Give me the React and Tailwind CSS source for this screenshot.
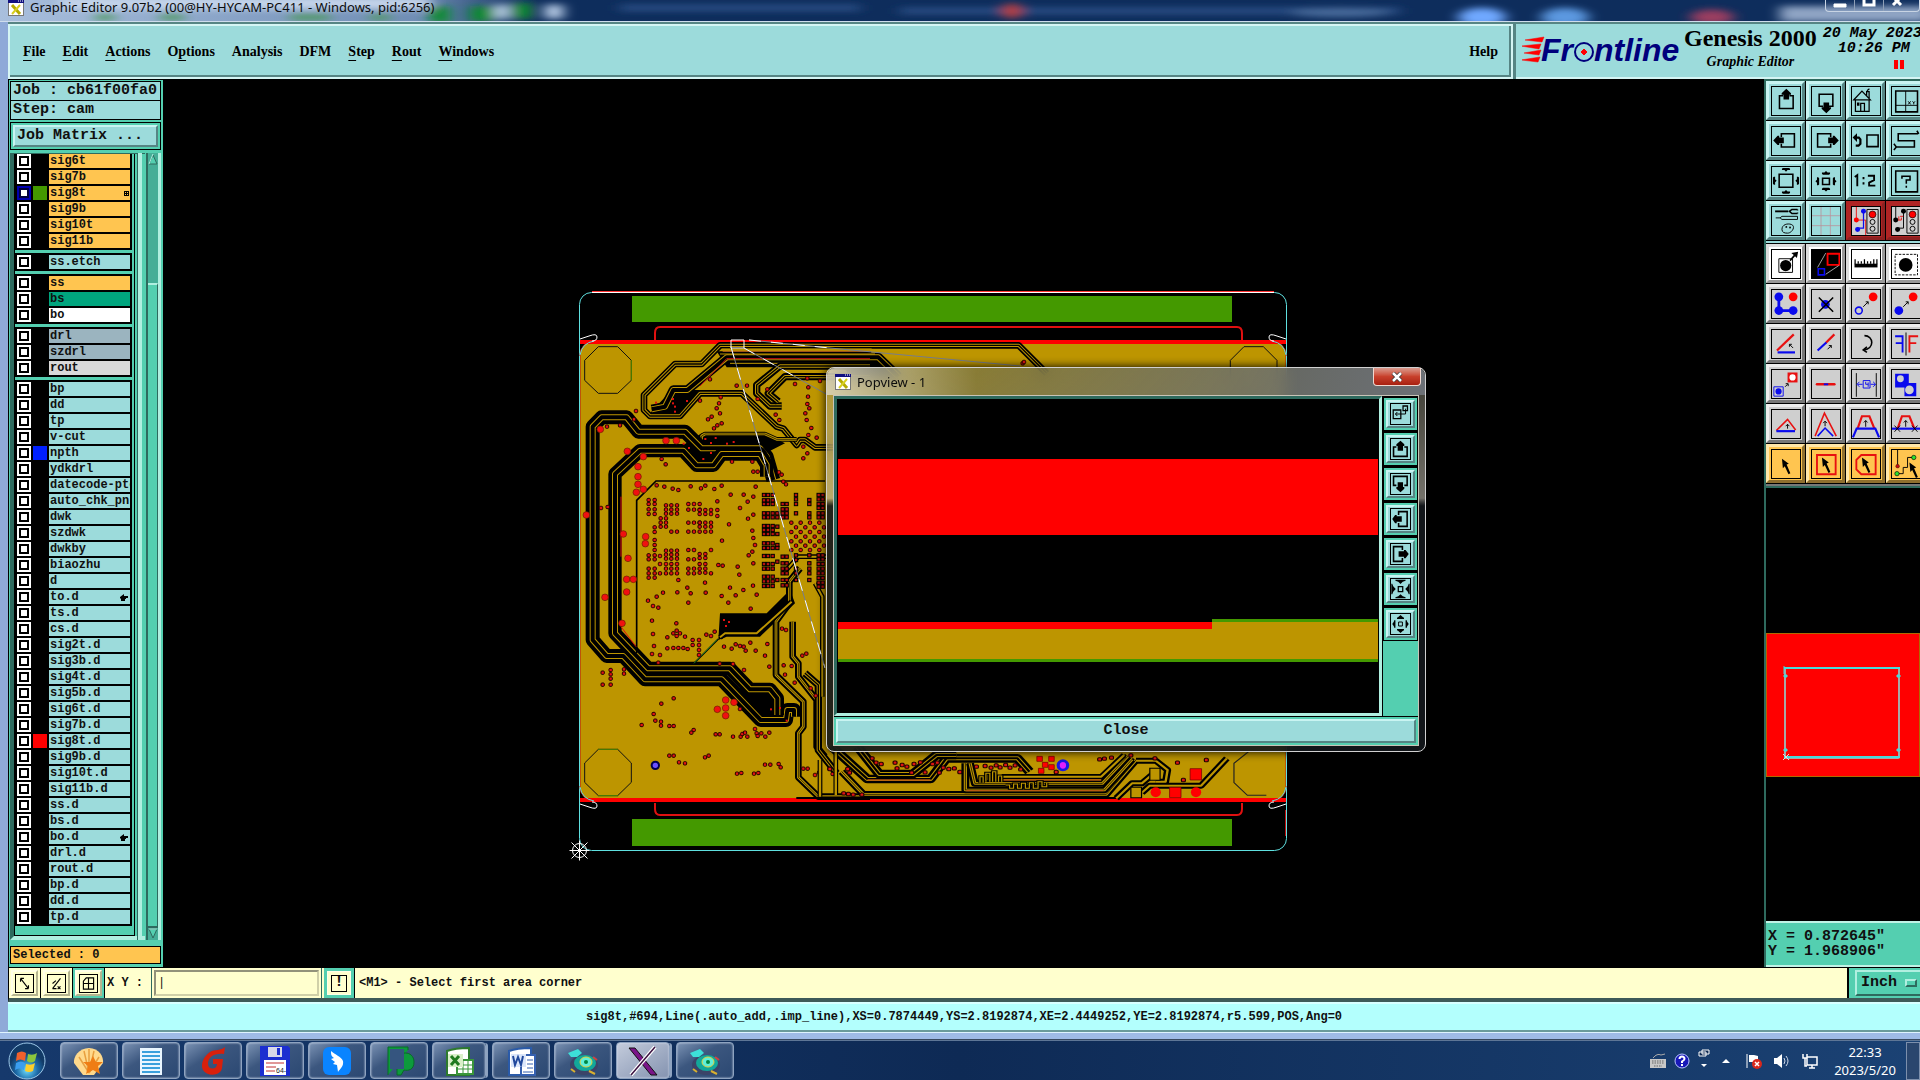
import React from "react";

const mono = "font-['Liberation_Mono','DejaVu_Sans_Mono',monospace]";
const serif = "font-['Liberation_Serif',serif]";
const sans = "font-['Noto_Sans','Open_Sans',sans-serif]";

const raised = "border-2 border-t-[#c9f4f2] border-l-[#c9f4f2] border-b-[#568584] border-r-[#568584]";

/* ---------- layer list ---------- */

const L = (name, tone = "sky", extra = {}) => ({ name, tone, ...extra });
const layerGroups = [
  [L("sig6t", "orange"), L("sig7b", "orange"), L("sig8t", "orange", { swatch: "bg-[#449900]", work: true }), L("sig9b", "orange"), L("sig10t", "orange"), L("sig11b", "orange")],
  [L("ss.etch")],
  [L("ss", "orange"), L("bs", "green"), L("bo", "white")],
  [L("drl", "steel"), L("szdrl", "steel"), L("rout", "gray")],
  [
    L("bp"), L("dd"), L("tp"), L("v-cut"), L("npth", "sky", { swatch: "bg-[#0020ff]" }), L("ydkdrl"), L("datecode-ptc"),
    L("auto_chk_pnl"), L("dwk"), L("szdwk"), L("dwkby"), L("biaozhu"), L("d"), L("to.d", "sky", { hand: true }), L("ts.d"),
    L("cs.d"), L("sig2t.d"), L("sig3b.d"), L("sig4t.d"), L("sig5b.d"), L("sig6t.d"), L("sig7b.d"),
    L("sig8t.d", "sky", { swatch: "bg-[#ff0000]" }), L("sig9b.d"), L("sig10t.d"), L("sig11b.d"), L("ss.d"), L("bs.d"),
    L("bo.d", "sky", { hand: true }), L("drl.d"), L("rout.d"), L("bp.d"), L("dd.d"), L("tp.d"),
  ],
];

const tones = {
  sky: "bg-[#9cdbdb]",
  orange: "bg-[#ffc550]",
  green: "bg-[#00a57e]",
  white: "bg-white",
  steel: "bg-[#9bb4bf]",
  gray: "bg-[#d9d9d9]",
};

function LayerRow({ layer }) {
  return (
    <div className="flex h-[14px] items-center">
      <input
        type="checkbox"
        aria-label={layer.name}
        defaultChecked={!!layer.work}
        className={
          "h-[14px] w-[14px] shrink-0 appearance-none border-2 bg-white " +
          (layer.work ? "border-[#0000b0] shadow-[inset_0_0_0_2px_#00003c]" : "border-white shadow-[inset_0_0_0_2px_#000]")
        }
      />
      <span className={"mx-0.5 h-[14px] w-[14px] shrink-0 " + (layer.swatch || "bg-black")} />
      <button
        type="button"
        className={
          "flex h-[14px] w-[81px] shrink-0 items-center overflow-hidden whitespace-nowrap pl-px text-left text-[12px] leading-[14px] font-bold text-[#101010] " +
          mono + " " + tones[layer.tone]
        }
      >
        {layer.name}
        {layer.work && (
          <svg className="ml-auto mr-px h-[5px] w-[5px] shrink-0" viewBox="0 0 5 5" shapeRendering="crispEdges">
            <path d="M0 0h5v5H0z" fill="#000" />
            <path d="M1 1h1v1H1zM3 1h1v1H3zM1 3h1v1H1zM3 3h1v1H3z" fill="#ffc550" />
          </svg>
        )}
        {layer.hand && (
          <svg className="ml-auto mr-0.5 h-[7px] w-[8px] shrink-0" viewBox="0 0 8 7">
            <path d="M0 3l4-3v2h4v2H6v1H5v2H1V5L0 4z" fill="#000" />
          </svg>
        )}
      </button>
    </div>
  );
}

function LeftPanel() {
  return (
    <aside className="flex w-[155px] shrink-0 flex-col border-t border-l border-black bg-[#54cfb0] p-px pr-0.5">
      <div className={"border border-black bg-[#9cdbdb] pl-0.5 text-[15px] leading-[18px] font-bold whitespace-nowrap text-[#101010] " + mono}>Job : cb61f00fa0</div>
      <div className={"-mt-px border border-black bg-[#9cdbdb] pl-0.5 text-[15px] leading-[18px] font-bold whitespace-nowrap text-[#101010] " + mono}>Step: cam</div>
      <div className="mt-0.5 border border-black p-0.5">
        <button type="button" className={"block w-full bg-[#9cdbdb] pl-0.5 text-left text-[15px] leading-[18px] font-bold text-[#101010] " + raised + " " + mono}>
          Job Matrix ...
        </button>
      </div>
      <div className="mt-[3px] flex min-h-0 flex-1">
        <div className="flex min-h-0 flex-1 flex-col overflow-hidden border-t border-t-[#2e6a5e] border-b-4 border-b-[#b0efe0] border-l-4 border-l-[#2e6a5e]">
          <div className="flex min-h-0 w-[121px] flex-1 flex-col gap-[3px] border-r border-b border-l border-black">
            {layerGroups.map((g, i) => (
              <div key={i} className={"flex w-[117px] shrink-0 flex-col gap-0.5 bg-black px-0.5 pb-0.5 " + (i ? "pt-0.5" : "")}>
                {g.map((l) => <LayerRow key={l.name} layer={l} />)}
              </div>
            ))}
          </div>
        </div>
        <div className="-ml-2 w-[5px] border-l border-[#2e6a5e] bg-[#b0efe0]" />
        <div className="ml-1 flex w-[15px] flex-col border-r-[3px] border-l-2 border-r-[#b0efe0] border-l-[#2e6a5e] bg-[#45ae97]">
          <svg className="h-3 w-full shrink-0" viewBox="0 0 10 12"><path d="M1 11L5 2l4 9z" fill="#54cfb0" stroke="#2e6a5e" /><path d="M1 11L5 1" stroke="#b0efe0" /></svg>
          <div className="h-[118px]" />
          <div className="flex-1 border-t-2 border-r border-b-2 border-t-[#b0efe0] border-r-[#2e6a5e] border-b-[#2e6a5e] bg-[#54cfb0]" />
          <svg className="h-3 w-full shrink-0" viewBox="0 0 10 12"><path d="M1 1l4 9 4-9z" fill="#54cfb0" stroke="#2e6a5e" /><path d="M1 1h8" stroke="#b0efe0" /></svg>
        </div>
      </div>
      <div className={"mt-1.5 mb-0.5 border border-black bg-[#ffc550] pl-0.5 text-[12px] leading-4 font-bold text-[#101010] " + mono}>Selected : 0</div>
    </aside>
  );
}

/* ---------- tool icons, drawn on a 90 unit grid ---------- */

const K = { fill: "none", stroke: "#000", strokeWidth: 5 };
const R = "#e81010";
const B = "#0a0aee";
const Tri = ({ x, y, r = 0 }) => <path transform={`translate(${x} ${y}) rotate(${r})`} d="M0-7l5 5h8v4l-3 3h-20l-3-3v-4h8z" fill="#000" />;
const Cursor = ({ x, y }) => <path transform={`translate(${x} ${y})`} d="M0 0l22 16-7 3 12 28-6 3-12-26-6 7z" fill="#000" />;

const icons = {
  up: <><path {...K} d="M36 28H24v41h44V28H56" /><path d="M46 6l15 14v5h-6v15H37V25h-6v-5z" /></>,
  down: <><path {...K} d="M36 62H23V23h44v39H54" /><path d="M46 84l15-14v-5h-6V50H37v15h-6v5z" /></>,
  left: <><path {...K} d="M30 32V22h42v42H30V54" /><path d="M4 43l14-15h5v6h15v18H23v6h-5z" /></>,
  right: <><path {...K} d="M60 32V22H18v42h42V54" /><path d="M86 43L72 28h-5v6H52v18h15v6h5z" /></>,
  home: <path fill="none" stroke="#000" strokeWidth="4" d="M6 41L32 13l27 28zM11 41v37h44V41M28 78V53h12v25M18 52h4v6h-4zM47 28V15h8v20M48 12l8-6" />,
  xy: <><path {...K} d="M12 13h70v67H12z" /><path stroke="#000" strokeWidth="3" d="M44 13v67M12 59h70M52 46l8 10M60 46l-8 10M66 46l4 5 4-5M70 51v5" fill="none" /></>,
  undo: <><path {...K} d="M48 26h36v37H48z" /><path {...K} strokeWidth="7" d="M14 34h8l5 6v14l-6 6h-9" /><path d="M2 34l14-14v28z" /></>,
  serp: <path {...K} d="M84 22H20v22h52v20H12M6 54l8 10-8 10M80 12l6 10" />,
  out: <><path {...K} d="M23 23h44v42H23z" /><Tri x={45} y={8} r={180} /><Tri x={45} y={81} /><Tri x={8} y={44} r={90} /><Tri x={82} y={44} r={270} /></>,
  pan: <><path {...K} d="M34 36h22v20H34z" /><Tri x={45} y={20} /><Tri x={45} y={72} r={180} /><Tri x={18} y={46} r={270} /><Tri x={72} y={46} r={90} /></>,
  half: <path {...K} strokeWidth="6" d="M6 32l8-6v36M34 32v7M34 49v7M48 28h20v14l-16 8v10h20" transform="translate(3 0)" />,
  help: <><path {...K} d="M12 13h70v67H12z" /><path {...K} d="M32 38v-8h26v12H46v12M46 60v7" /></>,
  paint: <><path stroke="#000" strokeWidth="6" d="M10 14h42" /><path {...K} d="M82 8H64L56 14l8 7h18M82 8v3M82 18v3" /><path {...K} strokeWidth="3" d="M12 35h14l6-5h50v10H32l-6-5M32 72c0-16 18-20 30-16 16 6 2 28-12 28-10 0-18-2-18-12z" /><circle cx="46" cy="64" r="3" /><circle cx="58" cy="66" r="3" /></>,
  grid: <path stroke="#b98f98" strokeWidth="2.5" fill="none" d="M29 0v90M59 0v90M0 28h90M0 60h90" />,
  net1: <><path d="M0 0h90v90H0z" fill="#cfcfcf" /><path stroke={R} strokeWidth="3" fill="none" d="M14 0v42h30v48" /><path stroke={B} strokeWidth="4" fill="none" d="M37 14v54H18" /><circle cx="14" cy="42" r="8" fill="#f00" /><circle cx="37" cy="14" r="8" fill={B} /><circle cx="18" cy="72" r="8" fill={B} /><path {...K} strokeWidth="3" d="M48 8h36v76H48z" /><circle cx="66" cy="24" r="11" fill="#f00" stroke="#000" strokeWidth="2" /><circle cx="66" cy="48" r="8" {...K} strokeWidth="3" /><circle cx="66" cy="70" r="8" {...K} strokeWidth="3" /></>,
  net2: <><path d="M0 0h90v90H0z" fill="#cfcfcf" /><path stroke="#000" strokeWidth="3" fill="none" d="M12 0v42M37 14v54H18" /><path stroke={R} strokeWidth="3" fill="none" d="M14 42h16v-8M22 30v12M26 30h10" /><circle cx="12" cy="42" r="8" /><circle cx="37" cy="14" r="8" /><circle cx="18" cy="72" r="8" /><path {...K} strokeWidth="3" d="M48 8h36v76H48z" /><circle cx="66" cy="24" r="11" fill="#f00" stroke="#000" strokeWidth="2" /><circle cx="66" cy="48" r="8" {...K} strokeWidth="3" /><circle cx="66" cy="70" r="8" {...K} strokeWidth="3" /></>,
  move: <><path {...K} strokeWidth="3" d="M22 28h44v44H22z" /><circle cx="44" cy="50" r="18" /><path d="M56 32l14-16-8-6 22-4-4 20-6-6-14 16z" /></>,
  zoomw: <><path d="M0 0h90v90H0z" /><path {...K} stroke="#f00" strokeWidth="6" d="M50 12h38v36H50z" /><path {...K} stroke={B} strokeWidth="5" d="M20 60h20v20H20z" /><path stroke="#fff" strokeWidth="2" d="M18 56L44 10M44 78l42-28" /></>,
  ruler: <><path d="M8 44h74v12H8z" /><path stroke="#000" strokeWidth="4" d="M10 30v16M20 36v8M30 36v8M40 30v16M50 36v8M60 36v8M70 30v16M80 30v16" /></>,
  pick: <><circle cx="44" cy="48" r="22" /><path {...K} strokeWidth="3" strokeDasharray="8 4" d="M10 14h72v66H10z" /></>,
  nodes: <><path stroke={B} strokeWidth="9" fill="none" d="M22 24v42h46" /><circle cx="22" cy="22" r="14" fill={B} /><circle cx="22" cy="66" r="14" fill={B} /><circle cx="68" cy="66" r="14" fill={B} /><circle cx="68" cy="22" r="14" fill="#f00" /></>,
  del: <><circle cx="43" cy="46" r="14" fill={B} /><path stroke="#000" strokeWidth="5" d="M22 24l46 46M68 24L22 70" /></>,
  copy: <><circle cx="68" cy="22" r="14" fill="#f00" /><circle cx="22" cy="66" r="11" fill="none" stroke={B} strokeWidth="5" /><path stroke="#000" strokeWidth="3" fill="none" d="M36 54l16-16M44 38h8v8" /></>,
  shift: <><circle cx="68" cy="22" r="14" fill="#f00" /><circle cx="22" cy="66" r="14" fill={B} /><path stroke="#000" strokeWidth="3" fill="none" d="M36 54l16-16M44 38h8v8" /></>,
  angle: <><path stroke={R} strokeWidth="7" d="M16 66L70 14" /><path stroke={B} strokeWidth="7" d="M18 72h56" /><path stroke="#000" strokeWidth="3" fill="none" d="M68 58L56 46M56 54v-8h8" /></>,
  line: <><path stroke={R} strokeWidth="7" d="M44 42L72 14" /><path stroke={B} strokeWidth="7" d="M18 66l28-26" /><path stroke="#000" strokeWidth="3" fill="none" d="M50 62l12-12M54 50h8v8" /></>,
  rot: <path {...K} d="M40 18c30 0 34 44-4 46M48 54L36 64l12 8" />,
  mirror: <><path stroke={B} strokeWidth="6" fill="none" d="M10 20h24v52M12 42h20" /><path stroke="#000" strokeWidth="3" d="M45 8v74" /><path stroke={R} strokeWidth="6" fill="none" d="M84 20H56v52M58 42h20" /></>,
  scale: <><path d="M50 8h32v32H50z" fill={R} /><circle cx="66" cy="24" r="10" fill="#fff" /><path {...K} stroke={B} strokeWidth="3" d="M6 54h30v30H6z" /><circle cx="21" cy="69" r="10" fill={B} /><path stroke="#000" strokeWidth="3" fill="none" d="M42 54l8-8M44 44h8v8" /></>,
  brk: <><path stroke={R} strokeWidth="8" strokeLinecap="round" d="M16 46h56" /><path stroke={B} strokeWidth="6" d="M38 46h14" /></>,
  dist: <><path stroke="#000" strokeWidth="3" d="M14 10v76M78 10v76" /><path {...K} stroke={B} strokeWidth="3" d="M36 34h22v24H36zM18 46h16M60 46h14M24 38l-8 8 8 8M68 38l8 8-8 8M44 38v8h8M52 40v14" /></>,
  shapes: <><path d="M10 12h44v30h24v42H40V56H10z" fill={B} /><circle cx="27" cy="28" r="11" fill="#cfcfcf" /><circle cx="56" cy="64" r="14" fill="#cfcfcf" /></>,
  t1: <><path {...K} stroke={R} d="M14 66l36-36 26 34" /><path stroke={B} strokeWidth="7" d="M14 68h60" /><path {...K} strokeWidth="3" d="M50 60V46M44 52l6-6 6 6" /></>,
  t2: <><path {...K} stroke={R} d="M10 84L40 10l38 74" /><path {...K} stroke={B} d="M18 84l24-26 26 26" /><path {...K} strokeWidth="3" d="M42 52V36M36 42l6-6 6 6" /></>,
  t3: <><path {...K} stroke={R} strokeWidth="7" d="M18 60l14-40h24l16 40" /><path {...K} stroke={B} strokeWidth="7" d="M3 88l12-28h60l12 28" /><path {...K} strokeWidth="3" d="M44 54V34M38 40l6-6 6 6" /></>,
  t4: <><path {...K} stroke={R} strokeWidth="7" d="M18 60l14-40h24l16 40" /><path stroke={B} strokeWidth="7" d="M0 60h90" /><path {...K} strokeWidth="3" d="M44 54V34M38 40l6-6 6 6M8 50l18 20M26 50L8 70M64 50l18 20M82 50L64 70" /></>,
  s1: <Cursor x={32} y={28} />,
  s2: <><path {...K} stroke={R} strokeWidth="6" d="M16 16h60v62H16z" /><Cursor x={32} y={24} /></>,
  s3: <><path {...K} stroke={R} strokeWidth="6" d="M30 16h46v62H30L14 62V32z" /><Cursor x={32} y={24} /></>,
  s4: <><path {...K} strokeWidth="3" d="M18 0v48M20 76h16V56h14V24h20" /><circle cx="18" cy="52" r="6" fill="#c01010" stroke="#000" /><circle cx="16" cy="76" r="7" fill="#2ee02e" stroke="#000" strokeWidth="2" /><circle cx="70" cy="24" r="7" fill="#2ee02e" stroke="#000" strokeWidth="2" /><Cursor x={56} y={40} /></>,
};

/* Heavier glyphs for the small buttons of the pop-up view, on a 60 unit grid. */
const small = {
  pop: <><path {...K} strokeWidth="4" d="M7 18h24v26H7zM38 6h14v14H38z" /><path {...K} strokeWidth="3" d="M46 14v16H14M20 24l-6 6 6 6" /></>,
  up: <><path {...K} d="M17 24H8v28h43V24h-9" /><path d="M30 5l12 11v5h-4v14H21V21h-4v-5z" /></>,
  down: <><path {...K} d="M17 34H8V7h43v27h-9" /><path d="M30 55l12-11v-5h-4V25H21v14h-4v5z" /></>,
  left: <><path {...K} d="M24 18V8h27v44H24V42" /><path d="M4 30l9-12h5v4h16v16H18v5h-5z" /></>,
  right: <><path {...K} d="M36 18V8H8v44h28V42" /><path d="M56 30L46 18h-5v4H24v16h17v5h5z" /></>,
  zin: <><path {...K} strokeWidth="4" d="M23 23h14v15H23z" /><path d="M14 2h32v3l-9 3-7 7-7-7-9-3zM14 58h32v-3l-9-3-7-6-7 6-9 3zM1 14v32h3l3-8 8-8-8-8-3-8zM59 14v32h-3l-3-8-8-8 8-8 3-8z" /></>,
  zout: <><path {...K} strokeWidth="3" d="M24 24h12v12H24z" /><path d="M30 3l7 6 4 2v4H19v-4l4-2zM30 57l7-6 4-2v-4H19v4l4 2zM4 30l5-7 1-4h4v22h-4l-1-4zM56 30l-5-7-1-4h-4v22h4l1-4z" /></>,
};

const toolRows = [
  ["up", "down", "home", "xy"],
  ["left", "right", "undo", "serp"],
  ["out", "pan", "half", "help"],
  ["paint", "grid", "net1", "net2"],
  ["move", "zoomw", "ruler", "pick"],
  ["nodes", "del", "copy", "shift"],
  ["angle", "line", "rot", "mirror"],
  ["scale", "brk", "dist", "shapes"],
  ["t1", "t2", "t3", "t4"],
  ["s1", "s2", "s3", "s4"],
];

const skins = {
  sky: "bg-[#9cdbdb] border-t-[#c9f4f2] border-l-[#c9f4f2] border-b-[#568584] border-r-[#568584]",
  red: "bg-[#b02424] border-t-[#b02424] border-l-[#b02424] border-b-[#8c2020] border-r-[#8c2020]",
  white: "bg-white border-t-[#dcdcdc] border-l-[#dcdcdc] border-b-[#999] border-r-[#999]",
  gray: "bg-[#cfcfcf] border-t-[#ededed] border-l-[#ededed] border-b-[#777] border-r-[#777]",
  amber: "bg-[#ffc550] border-t-[#ffe6a8] border-l-[#ffe6a8] border-b-[#8f6f2e] border-r-[#8f6f2e]",
};

function skinFor(row, name) {
  if (name.startsWith("net")) return skins.red;
  if (row < 4) return skins.sky;
  if (row === 4) return skins.white;
  if (row === 9) return skins.amber;
  return skins.gray;
}

function Tool({ name, skin }) {
  return (
    <button type="button" aria-label={name} className={"flex h-[39px] w-[39px] items-center justify-center border-[3px] " + skin}>
      <svg className="h-[30px] w-[30px] border border-black" viewBox="0 0 90 90">{icons[name]}</svg>
    </button>
  );
}

function RightPanel() {
  return (
    <aside className="flex w-[156px] shrink-0 flex-col overflow-hidden border-l-2 border-[#2e6a5e] bg-black">
      <div className="flex flex-col gap-px border-t-2 border-[#2e6a5e]">
        {toolRows.map((row, r) => (
          <div key={r} className={"flex gap-px " + (r === 4 ? "border-t-2 border-[#9cdbdb] pt-px" : "")}>
            {row.map((n) => <div key={n} className="shrink-0"><Tool name={n} skin={skinFor(r, n)} /></div>)}
          </div>
        ))}
      </div>
      <div className="mt-px h-1 border-t-2 border-b-2 border-t-[#777] border-b-[#2e6a5e]" />
      <div className="flex min-h-0 flex-1 flex-col">
        <div className="flex-1" />
        <div className="flex h-[144px] items-center border border-[#b06a00] bg-[#ff0000] pt-4 pl-4">
          <svg className="h-[94px] w-[118px] shrink-0" viewBox="0 0 118 94">
            <rect x="2" y="2" width="114" height="90" rx="1" fill="none" stroke="#a8a8a8" strokeWidth="2" />
            <path d="M1 2h116M1 91h116" stroke="#46dcdc" strokeWidth="2" />
            <path d="M1 0v8M1 9h3v2H1zM114 9h3v2h-3zM1 83h3v2H1zM114 83h3v2h-3z" fill="#46dcdc" stroke="#46dcdc" />
            <path d="M0 88l6 6M6 88l-6 6" stroke="#ddd" />
          </svg>
        </div>
        <div className="flex-1" />
      </div>
      <div className={"border-t-2 border-b-2 border-t-[#c0f3e6] border-b-[#c0f3e6] bg-[#54cfb0] px-0.5 py-1.5 text-[15px] leading-[15px] font-bold whitespace-pre text-[#101010] " + mono}>
        <div>X = 0.872645"</div>
        <div>Y = 1.968906"</div>
      </div>
    </aside>
  );
}

/* ---------- board artwork ---------- */

const GOLD = "#bd9500";

/* A trace bundle: a black clearance band with a pair of copper lines inside. */
function Bus({ d, w = 30, g = 14 }) {
  return (
    <g fill="none" strokeLinejoin="round">
      <path d={d} stroke="#000" strokeWidth={w} />
      <path d={d} stroke={GOLD} strokeWidth={g} />
      <path d={d} stroke="#000" strokeWidth={g - 6} />
    </g>
  );
}

const vias = [
  [420, 298], [500, 317], [531, 317], [390, 362], [452, 352], [447, 370], [440, 385], [450, 400], [425, 410], [414, 418], [432, 445], [455, 430], [442, 436],
  [198, 393], [192, 418], [150, 436], [111, 440], [675, 312], [712, 295], [750, 303], [715, 322], [714, 350], [712, 372], [718, 385], [706, 400], [710, 420],
  [724, 444], [617, 404], [628, 420], [563, 357], [592, 328], [715, 465], [740, 473], [700, 500], [712, 520], [700, 535], [275, 537], [287, 553], [486, 545],
  [547, 545], [550, 575], [563, 575], [627, 577], [635, 584], [640, 605], [648, 613], [93, 684], [113, 681], [557, 620], [455, 617], [433, 627], [406, 617],
  [393, 625], [362, 619], [325, 630], [308, 626], [283, 620], [260, 616], [482, 644], [521, 644], [550, 650], [533, 665], [510, 684], [477, 733], [534, 716],
  [550, 704], [456, 782], [547, 752], [550, 774], [555, 795], [536, 826], [547, 815], [550, 850], [503, 860], [508, 884], [445, 855], [458, 857], [325, 900],
  [405, 908], [480, 923], [520, 930], [549, 917], [560, 944], [407, 938], [362, 940], [352, 923], [322, 937], [279, 938], [260, 950], [234, 962], [355, 968],
  [455, 948], [497, 946], [475, 968], [249, 978], [265, 983], [542, 986], [246, 1022], [319, 1030], [249, 1062], [409, 1064], [423, 1068], [434, 1055],
  [292, 1072], [345, 1070], [292, 1105], [310, 1104], [325, 1104], [340, 1104], [353, 1107], [368, 1080], [368, 1095], [387, 1080], [387, 1095], [387, 1110],
  [387, 1125], [252, 1098], [246, 1122], [270, 1125], [265, 1148], [320, 1052], [320, 1068], [330, 1060], [310, 1060], [462, 1100], [497, 1093], [510, 1098],
  [521, 1100], [527, 1112], [541, 1088], [485, 1106], [557, 1112], [592, 1092], [585, 1127], [598, 1160], [522, 1170], [489, 1152], [449, 1151], [98, 1178],
  [122, 1170], [122, 1183], [122, 1196], [98, 1214], [122, 1214], [162, 1168], [162, 1181], [311, 1255], [274, 1271], [251, 1302], [256, 1322], [273, 1325],
  [273, 1337], [215, 1335], [298, 1338], [311, 1338], [371, 1350], [364, 1358], [437, 1363], [449, 1363], [489, 1370], [512, 1370], [517, 1362], [525, 1358],
  [532, 1370], [555, 1347], [560, 1360], [563, 1368], [574, 1360], [586, 1370], [598, 1358], [298, 1427], [311, 1427], [405, 1432], [416, 1427], [327, 1447],
  [345, 1450], [585, 1454], [601, 1454], [626, 1452], [632, 1462], [501, 1481], [514, 1479], [552, 1481], [565, 1479], [700, 1466], [713, 1466], [735, 1485],
  [747, 1478], [778, 1466], [788, 1482], [636, 1046], [648, 1050], [641, 1156], [645, 1184], [665, 1158], [674, 1208], [697, 1127], [709, 1121], [722, 1225], [737, 1247], [510, 1287],
  [1358, 250], [1362, 246],
];
const pads = [
  [91, 448], [172, 514], [204, 560], [204, 590], [204, 613], [220, 628], [199, 637], [220, 530], [288, 482], [319, 482], [49, 705], [160, 762], [227, 770],
  [226, 791], [174, 835], [170, 898], [190, 898], [105, 952], [156, 1030], [170, 936], [467, 1260], [467, 1284], [442, 1288], [492, 1267], [467, 1307],
];
const grid = (xs, ys) => xs.flatMap((x) => ys.map((y) => [x, y]));
const icPins = [
  ...grid([236, 254], [660, 672, 688, 702]), ...grid([288, 304, 321], [676, 689, 701]), ...grid([272, 288], [715, 728, 740]), ...grid([304, 321], [755]),
  ...grid([355, 372, 389], [672, 689, 728]), ...grid([389, 406, 423], [690, 702, 728, 740, 755]), ...grid([442], [664, 690, 708]), ...grid([355, 372], [755]),
  ...grid([254], [742, 756, 780, 795, 810]), ...grid([288, 304, 321], [812, 824, 836]), ...grid([236, 254], [826, 838, 866, 880, 893]), ...grid([270], [828, 852, 880]),
  ...grid([355, 372], [810, 838, 866, 880]), ...grid([389, 406], [822, 834, 852, 866, 878]), ...grid([423], [810, 880]), ...grid([288, 304, 321], [852, 866, 880]),
];
const bga = [
  ...grid([582, 594, 608], [645, 661, 672, 700, 712, 738, 750, 762, 790, 804, 828, 852, 866, 890, 904, 918]),
  ...grid([622], [700, 712, 740, 762, 795, 804, 845, 900]),
  ...grid([638, 650], [672, 688, 700, 712, 830, 850, 866, 880, 900, 916]),
  ...grid([678], [645, 658, 672, 700, 826, 840, 866, 880, 900]), ...grid([718], [660, 672, 700, 712, 826, 850, 866, 880, 900]),
  ...grid([746, 758], [645, 658, 672, 684, 700, 712, 826, 838, 852, 866, 880, 894, 908, 920]),
];
const bgaCross = [...grid([664, 692, 720, 748], [728, 756, 784, 810]), ...grid([678, 706, 734, 762], [742, 770, 797])];

const Via = ({ p }) => <rect x={p[0] - 5} y={p[1] - 5} width="10" height="10" rx="3" fill="#e01414" stroke="#200000" strokeWidth="3" />;

function Board() {
  return (
    <svg className="absolute top-0 left-0 h-[887px] w-[1601px]" viewBox="163 79 1601 887">
      {/* panel outline */}
      <rect x="579.5" y="292.5" width="707" height="558" rx="12" fill="none" stroke="#5fe0e0" />
      <path d="M592 291.5h682" stroke="#f33" />
      <path d="M592 292.5h682" stroke="#fff" />
      <path d="M1285.500 810v26" stroke="#c01010" />
      <rect x="632" y="296" width="600" height="26" fill="#449900" />
      <rect x="632" y="819" width="600" height="27" fill="#449900" />
      <path d="M655 340v-7q0-6 5-6h577q5 0 5 6v7M655 803v6q0 6 5 6h577q5 0 5-6v-6" fill="none" stroke="#e01010" strokeWidth="2" />
      {/* board body */}
      <rect x="580" y="341" width="706" height="460" rx="14" fill={GOLD} stroke="#c01010" />
      <path d="M579.500 356V786M1286.500 356V786" stroke="#5fe0e0" />
      <path d="M580 342h706M580 800h706" stroke="#f00" strokeWidth="4" />
      <path d="M580 355q2-12 14-14M580 787q2 12 14 14M1286 355q-2-12-14-14M1286 787q-2 12-14 14" fill="none" stroke="#5fe0e0" />
      <path d="M580 339l9-3q8-3 8 1q0 4-5 4M580 804l9 3q8 3 8-1q0-4-5-4M1286 339l-9-3q-8-3-8 1q0 4 5 4M1286 804l-9 3q-8 3-8-1q0-4 5-4" fill="none" stroke="#fff" />

      <g transform="translate(570 280) scale(.33333)">
        <path d="M85 200h58l41 41v60l-41 39H85l-41-39v-60zM85 1408h58l41 41v58l-41 40H85l-41-40v-58z" fill="none" stroke="#111" strokeWidth="3" />
        <path d="M184 241v60M85 1408h58M85 1547h58" stroke="#4c8a00" strokeWidth="3" />
        <path d="M2080 200h-58l-41 41v60l41 39h58l41-39v-60z" fill="none" stroke="#111" strokeWidth="3" />
        <path d="M235 405l70-75h85l-55 80zM395 460h190l60 30-50 25h-140l-30 50h-50l-50-60zM450 1000h140l70-70 15 40-105 100H470l-25 10zM540 1215h60l30 30v80l-60-10-75-85z" fill="#000" />
        <Bus d="M1430 280L1346 196H450L395 252H315L222 345V390L240 408H330L390 340H515L620 440L640 446L680 495L690 480H705L735 502H800" w={20} g={10} />
        <path d="M440 214H900L990 300H850L820 262H470z" fill="#000" />
        <Bus d="M985 290L925 232H470L352 330H310L285 380L245 388" w={28} g={18} />
        <path d="M455 207H905M450 222H915M480 250H890" stroke={GOLD} strokeWidth="3" />
        <path d="M458 214H900" stroke="#b8601c" strokeWidth="3" />
        <path d="M470 236H900M470 236L390 318" stroke="#c81414" strokeWidth="3" fill="none" />
        <Bus d="M900 258H630L560 315V340L600 378H635" w={22} g={10} />
        <Bus d="M900 290H645L595 340L625 365" w={22} g={10} />
        <Bus d="M395 490V468L405 462H585L620 478H680" w={14} g={8} />
        <Bus d="M610 600L590 530L570 505H395L345 455H205L170 412H95L68 440V1080L110 1128H160L225 1198H455L572 1320H648L652 1290H672V1310" w={42} g={18} />
        <Bus d="M590 590V555L570 522H455L430 556H380L340 512H210L135 582V1060L235 1165H480L540 1228H600L622 1255V1305" w={40} g={18} />
        <path d="M765 603H258L200 661V1120M370 1152l75-75" fill="none" stroke="#000" strokeWidth="5" />
        <path d="M153 650v180M153 1040l45 60" stroke="#e01010" strokeWidth="3" />
        <path d="M372 1150l70-72" stroke="#1c7a1c" strokeWidth="3" />
        <Bus d="M690 865L658 905V970L618 1025V1185L700 1265V1340L685 1360V1492L745 1550H900" w={20} g={8} />
        <Bus d="M450 1072L465 1060H560L665 965" w={16} g={6} />
        <Bus d="M668 1025V1130L685 1150V1190L740 1260V1400L765 1430" w={20} g={8} />
        <Bus d="M705 1180L745 1215V1410L800 1480" w={22} g={10} />
        <Bus d="M775 830H685L640 880M735 910L757 950V1250" w={14} g={6} />
        {vias.map((p, i) => <Via key={i} p={p} />)}
        {icPins.map((p, i) => <Via key={i} p={p} />)}
        <g stroke="#000" strokeWidth="3" fill="#b81212">
          {bga.map((p, i) => <rect key={i} x={p[0] - 5} y={p[1] - 5} width="10" height="10" />)}
        </g>
        {bgaCross.map((p, i) => <Via key={i} p={p} />)}
        <g fill="#f01010" stroke="#6a2000" strokeWidth="2">
          {pads.map((p, i) => <circle key={i} cx={p[0]} cy={p[1]} r="10" />)}
        </g>
        <g fill="#e01010">
          {[[406, 477], [437, 474], [491, 486], [471, 491], [423, 489], [400, 537], [423, 519], [357, 504], [341, 491], [309, 357], [309, 370], [351, 363], [315, 380], [315, 395], [258, 368], [462, 1020], [477, 1026], [468, 1038], [603, 1288], [630, 1284], [650, 1322]].map((p, i) => (
            <rect key={i} x={p[0] - 3} y={p[1] - 3} width="6" height="6" />
          ))}
        </g>
        <circle cx="256" cy="1456" r="11" fill="#6a50ff" stroke="#000050" strokeWidth="6" />
      </g>

      {/* lower edge routing */}
      <g transform="translate(820 600) scale(.395 .33333)">
        <Bus d="M30 440L120 537H280L320 475H500L530 515" w={26} g={12} />
        <Bus d="M95 440L150 522H235L295 465H345" w={26} g={12} />
        <Bus d="M0 480V590M40 450V585" w={12} g={6} />
        <Bus d="M55 515L110 583H725L800 480" w={20} g={8} />
        <Bus d="M368 490V570H720L790 478" w={20} g={8} />
        <Bus d="M380 490L392 550H715L780 468" w={20} g={8} />
        <Bus d="M460 530H712L770 465" w={16} g={6} />
        <path d="M120 540H280M460 540H712M370 572H718" stroke="#b85a10" strokeWidth="4" fill="none" />
        <path d="M-60 594H750" stroke="#000" strokeWidth="6" />
        <Bus d="M750 595L790 550H815L845 520M850 545H875L880 510L850 482H800M815 578L835 557H965L1030 475" w={18} g={6} />
        <path d="M405 548V530H413V548M420 545V520H430V545M437 545V515H445V545M452 545V528H460V545M470 555H480V565H490V552H500V565H510V550H520V565H530V548H540V565H552V545H562V560H574V548" fill="none" stroke="#000" strokeWidth="9" />
        <path d="M405 548V530H413V548M420 545V520H430V545M437 545V515H445V545M452 545V528H460V545M470 555H480V565H490V552H500V565H510V550H520V565H530V548H540V565H552V545H562V560H574V548" fill="none" stroke={GOLD} strokeWidth="3" />
        <path d="M1085 455L1048 490V548L1082 586H1130" fill="none" stroke="#222" strokeWidth="3" />
        <path d="M787 562h27v31h-27zM835 505h26v36h-26z" fill={GOLD} stroke="#000" strokeWidth="3" />
        <path d="M937 506h29v34h-29zM885 562h29v31h-29zM549 469h14v15h-14zM579 469h14v15h-14zM563 487h14v15h-14zM579 494h14v15h-14zM553 505h14v15h-14z" fill="#f00" stroke="#700" strokeWidth="2" />
        <ellipse cx="850" cy="577" rx="13" ry="15" fill="#f00" /><ellipse cx="952" cy="577" rx="13" ry="15" fill="#f00" />
        <ellipse cx="615" cy="496" rx="12" ry="14" fill="#e020ff" stroke="#1818e0" strokeWidth="8" />
        {[[132, 475], [142, 488], [155, 492], [208, 495], [195, 505], [190, 488], [220, 500], [238, 492], [254, 487], [285, 492], [297, 488], [312, 503], [326, 507], [340, 505], [354, 516], [396, 500], [418, 498], [433, 503], [446, 496], [456, 502], [470, 495], [481, 503], [494, 496], [508, 508], [232, 518], [266, 517], [302, 518], [708, 478], [720, 476], [738, 473], [787, 466], [848, 475], [905, 488], [978, 480], [920, 540], [598, 516], [25, 507], [70, 507], [75, 518], [60, 580], [72, 582], [84, 584], [106, 584]].map((p, i) => <Via key={i} p={p} />)}
      </g>

      {/* zoom guides */}
      <g fill="none">
        <path d="M731 340h13v8h-13z" stroke="#fff" />
        <path d="M731 347L825 668M744 348l82 46M749 340l81 8 190 18" stroke="#777d8c" />
        <path d="M731 347L825 668M744 348l50 28M749 340l81 8" stroke="#fff" strokeDasharray="12 10" />
      </g>
      {/* datum */}
      <g stroke="#fff" fill="none" transform="translate(579.500 850.500)">
        <circle r="7" /><path d="M-10 0H10M0-10V10M-8-8L8 8M8-8L-8 8" />
      </g>
    </svg>
  );
}

function XIcon() {
  return (
    <svg className="h-4 w-4 shrink-0" viewBox="0 0 16 16">
      <path d="M0 0h16v16H0z" fill="#777" /><path d="M1 3h14v12H1z" fill="#fff" /><path d="M0 0h16v3H0z" fill="#101080" /><path d="M10 1h1M12 1h1M14 1h1" stroke="#fff" />
      <path d="M4 5l8 9" stroke="#b5ab00" strokeWidth="3" /><path d="M12 5l-8 9" stroke="#d8cf20" strokeWidth="2" />
    </svg>
  );
}

function Popview() {
  return (
    <section className="absolute top-[288px] left-[663px] flex h-[385px] w-[600px] flex-col rounded-lg border border-[#d0d0d0] bg-linear-to-b from-[#9a988060] via-[#b8b4a8a0] via-34% to-[#14181ce8] to-36% px-1.5 pb-[5px] shadow-[0_0_10px_#000] backdrop-blur-sm">
      <header className="relative -mx-1.5 flex h-[27px] shrink-0 items-center gap-1.5 rounded-t-lg bg-linear-to-r from-[#e8e6dcb0] via-[#6e6a3899] via-25% to-[#6c7076] px-1.5 pl-2">
        <XIcon />
        <h2 className={"text-[13px] leading-5 text-[#0c0c0c] " + sans}>Popview - 1</h2>
        <button type="button" aria-label="Close Popview" className="absolute top-0 right-1 flex h-[18px] w-12 items-center justify-center rounded-b border border-t-0 border-[#f0d8d0] bg-linear-to-b from-[#d99a8e] via-[#c8402c] via-50% to-[#a82010]">
          <svg className="h-[10px] w-3" viewBox="0 0 12 10"><path d="M2 1l8 8M10 1L2 9" stroke="#333" strokeWidth="4" /><path d="M2 1l8 8M10 1L2 9" stroke="#fff" strokeWidth="2.5" /></svg>
        </button>
      </header>
      <div className="flex min-h-0 flex-1 flex-col border border-[#c8c4b8] bg-black">
        <div className="flex min-h-0 flex-1">
          <div className="flex flex-1 flex-col border-[3px] border-t-[#2e6a5e] border-r-[#b0efe0] border-b-[#b0efe0] border-l-[#2e6a5e] bg-black px-px">
            <div className="h-[60px]" />
            <div className="h-[76px] bg-[#ff0000]" />
            <div className="h-[84px]" />
            <div className="flex h-[43px] items-end border-b-[3px] border-[#449900]">
              <div className="h-[37px] w-[374px] border-t-[7px] border-[#ff0000] bg-[#bd9500]" />
              <div className="h-[40px] flex-1 border-t-[3px] border-[#449900] bg-[#bd9500]" />
            </div>
          </div>
          <div className="ml-px flex w-[35px] flex-col bg-[#54cfb0]">
            {["pop", "up", "down", "left", "right", "zin", "zout"].map((n) => (
              <div key={n} className="border border-t-2 border-black p-0.5">
                <button type="button" aria-label={"View " + n} className={"flex h-7 w-full items-center justify-center bg-[#9cdbdb] " + raised}>
                  <svg className="h-[22px] w-[21px] border border-black" preserveAspectRatio="none" viewBox="0 0 60 60">{small[n]}</svg>
                </button>
              </div>
            ))}
          </div>
        </div>
        <div className="mt-px bg-[#54cfb0] p-0.5">
          <button type="button" className={"block w-full bg-[#9cdbdb] text-center text-[15px] leading-5 font-bold text-[#101010] " + raised + " " + mono}>Close</button>
        </div>
      </div>
    </section>
  );
}

/* ---------- header ---------- */

function TitleBar() {
  return (
    <header className="relative flex h-[22px] shrink-0 items-start gap-1.5 overflow-hidden border-b border-[#cfdcec] bg-linear-to-r from-[#a9bfdd] via-[#6f8db5] via-22% to-[#0e2d5c] to-28% pl-2">
      <svg className="absolute inset-0 h-full w-full" preserveAspectRatio="none" viewBox="0 0 1920 27">
        <defs><filter id="soft"><feGaussianBlur stdDeviation="7 4" /></filter></defs>
        <g filter="url(#soft)">
          <path d="M60 -4h370v16H60z" fill="#c4d4ea" />
          <path d="M95 18h20v8h-20zM160 18h24v8h-24zM290 18h40v8h-40zM370 18h20v8h-20z" fill="#4f9a60" />
          <path d="M430 8h20v22h-20zM470 8h24v20h-24zM512 4h20v20h-20z" fill="#0f8a30" />
          <path d="M495 6h14v18h-14zM545 6h18v18h-18z" fill="#bcd0ea" />
          <ellipse cx="1482" cy="22" rx="24" ry="12" fill="#6fa8ff" /><ellipse cx="1565" cy="22" rx="24" ry="12" fill="#5c98e0" />
          <ellipse cx="1712" cy="22" rx="22" ry="10" fill="#9a3c60" /><path d="M1780 8h150v20h-150z" fill="#8fa4c4" />
          <path d="M620 10h240M900 14h500" stroke="#2b4f86" strokeWidth="8" />
          <circle cx="1012" cy="14" r="10" fill="#b84040" /><ellipse cx="1340" cy="16" rx="50" ry="6" fill="#4a6c9c" />
        </g>
      </svg>
      <div className="relative flex items-start gap-1.5">
        <XIcon />
        <h1 className={"text-[13px] leading-[15px] whitespace-nowrap text-[#0c0c0c] " + sans}>
          Graphic Editor 9.07b2 (00@HY-HYCAM-PC411 - Windows, pid:6256)
        </h1>
      </div>
      <div className="relative ml-auto flex h-3 w-[95px] shrink-0 rounded-b border border-t-0 border-[#c8d4e4]">
        {["M8 4h12v3H8z", "M9 0v5h10V0", "M9-3l8 8M17-3l-8 8"].map((d, i) => (
          <button key={i} type="button" aria-label={["Minimize", "Restore", "Close"][i]} className={"flex items-start border-[#8fa0b8] " + (i ? "border-l" : "")}>
            <svg className="h-[10px] w-[28px]" viewBox="0 0 28 10"><path d={d} fill={i ? "none" : "#fff"} stroke="#fff" strokeWidth={i ? 3 : 1} /></svg>
          </button>
        ))}
      </div>
    </header>
  );
}

const menus = [["", "F", "ile"], ["", "E", "dit"], ["", "A", "ctions"], ["O", "p", "tions"], ["Analysis", "", ""], ["DFM", "", ""], ["", "S", "tep"], ["", "R", "out"], ["", "W", "indows"]];

function MenuBar() {
  return (
    <div className="flex h-[57px] shrink-0 border-t-2 border-[#568584] bg-[#568584]">
      <nav className={"flex flex-1 items-center gap-[17px] border-2 border-t-[#d5f5f4] border-r-[#d5f5f4] border-b-[#d5f5f4] border-l-[#d5f5f4] bg-[#9cdbdb] px-[13px] text-[14px] leading-5 font-bold text-black shadow-[inset_-2px_-2px_0_#568584] " + serif}>
        {menus.map(([a, u, b]) => (
          <button key={a + u + b} type="button">{a}<span className="underline decoration-1 underline-offset-4">{u}</span>{b}</button>
        ))}
        <button type="button" className="ml-auto">Help</button>
      </nav>
      <div className="ml-[3px] flex w-[404px] shrink-0 overflow-hidden border-b-2 border-b-[#d5f5f4] bg-[#9cdbdb] pl-1.5">
        <svg className="h-[54px] w-[162px] shrink-0" viewBox="0 -10 162 54">
          <path d="M4 4h18v3H4zM0 11h20v3H0zM0 18h19v3H0zM0 25h18v3H0z" fill="#9cdbdb" />
          <path d="M3 6l19-3-2 5zM-1 12l20-2-2 5zM2 19l17-3-2 5zM-1 26l19-3-2 5z" fill="#f00" stroke="#f00" strokeWidth=".5" />
          <text x="19" y="27" fontSize="32" fontWeight="bold" fontStyle="italic" fontFamily="Liberation Sans, sans-serif" fill="#00007c">Fr</text>
          <circle cx="62" cy="18" r="9" fill="#9cdbdb" stroke="#00007c" strokeWidth="2" /><path d="M62 15l3 3-3 3-3-3z" fill="#f00" stroke="#f00" />
          <text x="72" y="27" fontSize="32" fontWeight="bold" fontStyle="italic" fontFamily="Liberation Sans, sans-serif" fill="#00007c">ntline</text>
        </svg>
        <div className={"shrink-0 text-center text-black " + serif}>
          <div className="text-[24px] leading-7 font-bold">Genesis 2000</div>
          <div className="text-[14px] leading-5 font-bold italic">Graphic Editor</div>
        </div>
        <div className={"ml-1.5 flex shrink-0 flex-col items-end pt-0.5 text-[15px] leading-[15px] font-bold text-black italic " + mono}>
          <span>20 May 2023</span>
          <span className="mr-3">10:26 PM</span>
          <span className="mt-1 mr-[18px] flex gap-0.5"><i className="h-[9px] w-1 bg-[#f00]" /><i className="h-[9px] w-1 bg-[#f00]" /></span>
        </div>
      </div>
    </div>
  );
}

/* ---------- bottom rows ---------- */

function CommandRow() {
  const cells = ["M7 6l14 18M7 6v6M7 6h6M21 24v-6M21 24h-6", "M7 24L21 6M7 15l6-5M7 24h7M16 20l5 5M21 20l-5 5", "M5 15h18M14 5v20M5 25h18V5H10L5 11z"];
  return (
    <div className={"flex h-[35px] shrink-0 border-t border-b-4 border-l border-t-black border-b-[#3e5a58] border-l-black bg-[#ffffce] text-[12px] font-bold text-[#101010] " + mono}>
      {cells.map((d, i) => (
        <button key={i} type="button" aria-label={["Snap line", "Snap angle", "Snap grid"][i]} className={"flex w-8 items-center justify-center border-r border-black p-0.5 " + (i === 2 ? "bg-[#54cfb0]" : "bg-[#ffffce]")}>
          <span className="flex h-full w-full items-center justify-center border-2 border-t-[#ffffe8] border-r-[#b5b590] border-b-[#b5b590] border-l-[#ffffe8] bg-[#ffffce]">
            <svg className="h-[19px] w-[19px] border border-black" viewBox="0 0 28 30"><path d={d} fill="none" stroke="#000" strokeWidth="2" /></svg>
          </span>
        </button>
      ))}
      <label htmlFor="xy" className="flex items-center pr-2 pl-0.5 whitespace-pre">X Y :</label>
      <div className="border-r border-l border-[#2e6a5e] p-0.5">
        <input id="xy" type="text" defaultValue="|" className="h-full w-[165px] border-2 border-t-[#92927a] border-r-[#d0d0a8] border-b-[#d0d0a8] border-l-[#92927a] bg-[#ffffce] px-0.5 font-normal" />
      </div>
      <button type="button" aria-label="Message history" className="ml-0.5 flex w-[31px] items-center justify-center border-r border-black bg-[#54cfb0] p-[3px]">
        <span className="flex h-full w-full items-center justify-center border border-[#ffffe8] bg-[#ffffce]">
          <span className="flex h-[17px] w-4 items-center justify-center border border-black text-[15px] leading-4">!</span>
        </span>
      </button>
      <output className="flex flex-1 items-center pl-1">&lt;M1&gt; - Select first area corner</output>
      <div className="flex w-[73px] shrink-0 items-stretch overflow-hidden border-l-2 border-black bg-[#54cfb0] pt-0.5 pb-0.5 pl-1.5">
        <button type="button" className="flex w-[76px] shrink-0 items-center border-t-2 border-b-2 border-l-2 border-t-[#b0efe0] border-b-[#2e6a5e] border-l-[#b0efe0] pl-1 text-[15px]">
          Inch<span className="ml-2 h-2 w-3 border-2 border-t-[#b0efe0] border-r-[#2e6a5e] border-b-[#2e6a5e] border-l-[#b0efe0]" />
        </button>
      </div>
    </div>
  );
}

const apps = [
  <path key="a" d="M16 3C6 3 0 12 1 18l9 12h11l9-12C31 12 26 3 16 3z" fill="#ffd98c" />,
  <path key="b" d="M5 3h22v27H5z" fill="#e9f6ff" />,
  <path key="c" d="M28 2c-4 4-10 2-15 5-6 4-10 12-7 18 4 7 18 6 19-2l1-9H16v5h4c0 6-9 6-9 0 0-7 6-11 16-10z" fill="#d8200c" />,
  <path key="d" d="M1 1h28l2 2v28H1z" fill="#1c2ed0" />,
  <rect key="e" x="2" y="2" width="28" height="28" rx="6" fill="#0a84ff" />,
  <path key="f" d="M5 30V2h20v3M14 30V17c0-12 17-12 17 0 0 8-6 9-10 8l-3 5z" fill="#0d9a3c" stroke="#086a28" />,
  <path key="g" d="M4 6Q12 3 26 3v27H4z" fill="#fff" stroke="#2d7a2d" strokeWidth="2" />,
  <path key="h" d="M4 6Q12 3 26 3v27H4z" fill="#fff" stroke="#2a5aa8" strokeWidth="2" />,
  null, null, null,
];
const details = [
  <g key="a"><path d="M16 28L6 12M16 28L11 6M16 28V4M16 28L21 6M16 28l10-16" stroke="#e8a040" strokeWidth="1.5" /><path d="M20 11l3 6h7l-5 4 2 8-7-4-7 4 2-8-5-4h7z" fill="#ef7d14" /></g>,
  <path key="b" d="M7 7h18M7 11h18M7 15h18M7 19h18M7 23h18M7 27h18" stroke="#3aa0dc" strokeWidth="2" />,
  null,
  <g key="d"><path d="M9 2h14v10H9z" fill="#d8d8e8" /><path d="M18 3h3v7h-3z" fill="#1c2ed0" /><path d="M5 15h22v15H5z" fill="#fff" /><path d="M7 18h18M7 22h10M7 26h9" stroke="#c03030" /><text x="17" y="28" fontSize="7" fill="#222" fontFamily="Liberation Sans">64-</text></g>,
  <path key="e" d="M10 6c4 4 10 5 12 10 1 5-3 8-5 11l-1-7-4-1 2-2-4-3 3-1c-3-2-3-4-3-7z" fill="#fff" />,
  <path key="f" d="M7 4h14v20H7z" fill="#35557f" />,
  <g key="g"><path d="M14 15h16v14H14z" fill="#fff" stroke="#3a963a" strokeWidth="2" /><path d="M14 20h16M14 24h16M20 15v14M25 15v14" stroke="#3a963a" /><path d="M5 9h15v13H5z" fill="#d9efc8" /><path d="M8 11l8 9M16 11l-8 9" stroke="#1f7a1f" strokeWidth="3" /></g>,
  <g key="h"><path d="M16 10h14v20H16z" fill="#fff" stroke="#3560b0" strokeWidth="2" /><path d="M22 15h6M22 19h6M22 23h6M18 27h10" stroke="#3560b0" /><path d="M6 9h15v13H6z" fill="#dbe6fa" /><path d="M8 11l2 9 3-8 3 8 2-9" fill="none" stroke="#20489c" strokeWidth="2" /></g>,
  "disc", "x", "disc",
];

const Disc = () => (
  <g>
    <ellipse cx="17" cy="20" rx="14" ry="10" fill="#3b4468" /><ellipse cx="18" cy="18" rx="11" ry="8" fill="#12a89a" />
    <ellipse cx="19" cy="17" rx="6" ry="5" fill="#5ff0d8" stroke="#e8d040" /><circle cx="19" cy="17" r="2" fill="#084" />
    <path d="M1 8l10-4 4 4-5 4H4z" fill="#3de0d8" /><path d="M22 26l6 3M4 24l4 3" stroke="#d8b030" strokeWidth="2" /><path d="M26 12l4 3" stroke="#d04040" strokeWidth="2" />
  </g>
);

function Taskbar() {
  return (
    <footer className={"flex h-10 shrink-0 items-stretch border-t border-[#5e7696] bg-linear-to-r from-[#16396c] via-[#0e2a55] to-[#1b4274] text-white " + sans}>
      <button type="button" aria-label="Start" className="flex w-[60px] items-center pl-2">
        <svg className="h-[38px] w-[38px]" viewBox="0 0 38 38">
          <defs><radialGradient id="orb" cy=".75"><stop offset="0" stopColor="#6fe0ff" /><stop offset=".6" stopColor="#1c6aa8" /><stop offset="1" stopColor="#123a66" /></radialGradient></defs>
          <circle cx="19" cy="19" r="18" fill="url(#orb)" stroke="#9cc8e8" />
          <path d="M9 11q5-3 9 0l-1 8q-5-3-9 0z" fill="#f0602c" /><path d="M20 12q5 2 9-1l-2 8q-4 3-8 0z" fill="#8cc63c" />
          <path d="M8 21q5-3 9 0l-1 7q-5-3-9 0z" fill="#3a9ef0" /><path d="M18 22q5 2 9-1l-2 8q-4 2-8 0z" fill="#fccf2c" />
        </svg>
      </button>
      <div className="flex gap-1 py-px">
        {apps.map((a, i) => (
          <button
            key={i}
            type="button"
            aria-label={"Application " + (i + 1)}
            className={
              "flex items-center justify-center rounded border border-[#8ea3c0] " +
              (i === 6 || i === 9 ? "mr-0.5 w-[54px] shadow-[inset_0_0_2px_#dfe8f5,3px_0_0_-1px_#8ea3c0] " : "w-[58px] shadow-[inset_0_0_2px_#dfe8f5] ") +
              (i === 9 ? "bg-linear-to-br from-[#c4ccdc] to-[#8493b0]" : "bg-linear-to-br from-[#7c93b4] via-[#3c577f] via-40% to-[#2b4872]")
            }
          >
            <svg className="h-8 w-8" viewBox="0 0 32 32">
              {a}
              {details[i] === "disc" ? <Disc /> : details[i] === "x" ? (
                <g><path d="M2 3h6l22 27h-6z" fill="#7a1488" stroke="#111" /><path d="M28 2L4 30" stroke="#fff" strokeWidth="4" /><path d="M28 2L4 30" stroke="#3a1040" strokeWidth="1.5" /></g>
              ) : details[i]}
            </svg>
          </button>
        ))}
      </div>
      <div className="ml-auto flex items-center gap-2">
        <svg className="h-4 w-4" viewBox="0 0 16 16"><path d="M0 6h16v9H0z" fill="#c8c8c8" /><path d="M2 8h12M2 10h12M4 13h8" stroke="#666" strokeDasharray="1.5 1" /><path d="M3 5q4-5 8-3l4-1" fill="none" stroke="#aaa" /></svg>
        <svg className="h-4 w-4" viewBox="0 0 16 16"><circle cx="8" cy="8" r="7" fill="#1818b8" stroke="#b8c4ff" /><path d="M5.5 6q0-2.500 2.500-2.500T10.500 6q0 1-2.500 2.500v1.500M8 11v2" fill="none" stroke="#fff" strokeWidth="2" /></svg>
        <svg className="-mt-1 h-5 w-3" viewBox="0 0 12 20"><path d="M4 1h7v4H4zM1 3h7v4H1z" fill="#0e2a55" stroke="#fff" /><path d="M3 15h6l-3 3z" fill="#fff" /></svg>
        <svg className="mx-1 h-3 w-2" viewBox="0 0 8 12"><path d="M0 8l4-4 4 4z" fill="#fff" /></svg>
        <svg className="ml-1 h-4 w-4" viewBox="0 0 16 16"><path d="M1 1v14" stroke="#fff" /><path d="M3 2h5l4 1v6H3z" fill="#fff" /><circle cx="11" cy="11" r="5" fill="#d8281c" /><path d="M9 9l4 4M13 9l-4 4" stroke="#fff" strokeWidth="1.500" /></svg>
        <svg className="ml-1 h-4 w-4" viewBox="0 0 16 16"><path d="M0 5h3l5-4v14l-5-4H0z" fill="#fff" /><path d="M10 5q2 3 0 6M12 3q4 5 0 10" fill="none" stroke="#cfd8e8" /></svg>
        <svg className="ml-1 h-4 w-4" viewBox="0 0 16 16"><path d="M5 4h10v8H5zM7 15h6M10 12v3M1 1v4h4V1M3 5v8h2" fill="none" stroke="#fff" strokeWidth="1.500" /></svg>
        <div className="mr-0.5 ml-2 w-[62px] text-center text-[13px] leading-[18px] whitespace-nowrap"><div>22:33</div><div>2023/5/20</div></div>
        <button type="button" aria-label="Show desktop" className="h-[38px] w-[14px] border border-[#7c8fac] bg-[#2a466e]" />
      </div>
    </footer>
  );
}

export default function App() {
  return (
    <div className="flex h-screen w-full flex-col overflow-hidden bg-black">
      <TitleBar />
      <div className="flex min-h-0 flex-1 flex-col border-l-8 border-[#8fa9d8]">
        <MenuBar />
        <main className="flex min-h-0 flex-1">
          <LeftPanel />
          <div className="relative min-w-0 flex-1 overflow-hidden bg-black">
            <Board />
            <Popview />
          </div>
          <RightPanel />
        </main>
        <CommandRow />
        <div className={"flex h-[30px] shrink-0 items-center justify-center border-t-2 border-b-2 border-t-[#d8ffff] border-b-[#6a9b9b] bg-[#b3fffd] text-[12px] font-bold whitespace-nowrap text-[#101010] " + mono}>
          sig8t,#694,Line(.auto_add,.imp_line),XS=0.7874449,YS=2.8192874,XE=2.4449252,YE=2.8192874,r5.599,POS,Ang=0
        </div>
      </div>
      <div className="h-2 shrink-0 border-t border-b border-t-[#dff4ff] border-b-[#3a4a60] bg-[#9fbbe6]" />
      <Taskbar />
    </div>
  );
}
